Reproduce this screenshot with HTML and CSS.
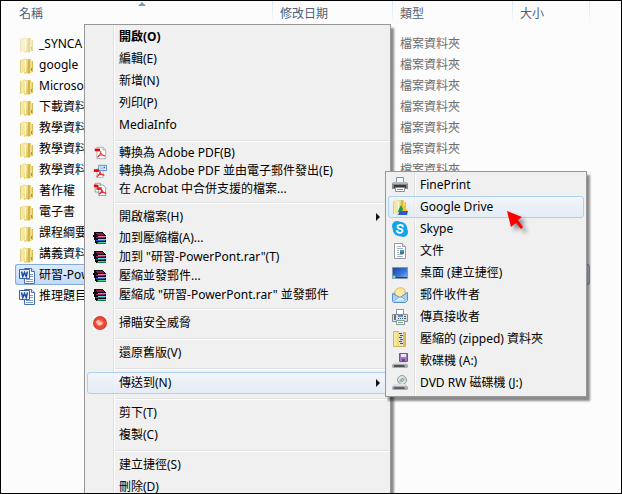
FILE: index.html
```html
<!DOCTYPE html>
<html lang="zh-Hant">
<head>
    <meta charset="UTF-8">
    <meta name="viewport" content="width=device-width, initial-scale=1.0">
    <title>檔案總管</title>
    <link rel="stylesheet" href="styles.css">
</head>
<body>
    <!-- Shared icons -->
    <svg class="sprite" aria-hidden="true">
        <defs>
            <linearGradient id="gold" x1="0" x2="1" y1="0" y2="0">
                <stop offset="0" stop-color="#fbf1ae"/>
                <stop offset="1" stop-color="#d9b848"/>
            </linearGradient>
            <linearGradient id="goldFront" x1="0" x2="1" y1="0" y2="1">
                <stop offset="0" stop-color="#fdf6c4"/>
                <stop offset="1" stop-color="#dfc050"/>
            </linearGradient>
            <linearGradient id="screen" x1="0" x2="1" y1="0" y2="1">
                <stop offset="0" stop-color="#1c3f9c"/>
                <stop offset="0.6" stop-color="#3c79d8"/>
                <stop offset="1" stop-color="#8fc0f5"/>
            </linearGradient>
            <radialGradient id="redBall">
                <stop offset="0" stop-color="#ffc4b4"/>
                <stop offset="0.5" stop-color="#f0503c"/>
                <stop offset="1" stop-color="#d83a30"/>
            </radialGradient>
        </defs>
        <symbol id="folder" viewBox="0 0 16 16">
            <path d="M5 1h7v14H5z" fill="#e8d06c"/>
            <path d="M11 3h3v11l-3 1z" fill="#efdc88"/>
            <path d="M13 3h1v11h-1z" fill="#d8bc5c"/>
            <path d="M1 2l5-2v14l-5 1z" fill="#f3e7a4"/>
            <path d="M1 2h1v13H1z" fill="#e2cd78"/>
            <path d="M5 2l4-1v14l-4 1z" fill="url(#goldFront)"/>
            <path d="M9 1l2 1v13l-2 1z" fill="#d2b24a"/>
            <path d="M6 3h1v11H6z" fill="#fffbe0"/>
            <path d="M12 10h1v3h-1z" fill="#5fa0c8"/>
        </symbol>
        <symbol id="word" viewBox="0 0 16 16">
            <path d="M5.500.500h7l3 3v12h-10z" fill="#fff" stroke="#4a6fae"/>
            <path d="M12.500.500v3h3" fill="#dbe7f7" stroke="#4a6fae"/>
            <path d="M11 6.500h3M11 8.500h3M7 11.500h7M7 13.500h7" stroke="#7d9cce"/>
            <path d="M.500 1.500h10v9h-10z" fill="#e6effb" stroke="#3a62a8"/>
            <path d="M2.500 3.500l1.300 5 1.700-4 1.700 4 1.300-5" fill="none" stroke="#1f4aa0" stroke-width="1.500"/>
        </symbol>
        <symbol id="pdf" viewBox="0 0 16 16">
            <path d="M4.500 1.500h7l3 3v10h-10z" fill="#fff" stroke="#a8a8a8"/>
            <path d="M11.500 1.500v3h3" fill="#ddd" stroke="#a8a8a8"/>
            <path d="M2 3h6v3H2z" fill="#e00"/>
            <path d="M9 6c0 3-1 5-4 7M8.500 6c.500 3 2.500 5 5 5.500M6 11.500c2-1.500 5-1.500 8 0" fill="none" stroke="#e0323a" stroke-width="1.300"/>
        </symbol>
        <symbol id="pdf-mail" viewBox="0 0 16 16">
            <path d="M4.500 5.500h7v10h-7z" fill="#fff" stroke="#b0b0b0"/>
            <path d="M6.500 1.500h9v6h-9z" fill="#e8f2fd" stroke="#4a86c8"/>
            <path d="M8 3.500h3M8 5.500h4" stroke="#8db4df"/>
            <path d="M12 3h2v2h-2z" fill="#36c"/>
            <path d="M1 6h6v3H1z" fill="#e00"/>
            <path d="M8 8c0 3-1 5-4 7M8 8c.500 3 2 4.500 4.500 5M5 13c2-1.500 5-1.500 8 0" fill="none" stroke="#e0323a" stroke-width="1.300"/>
        </symbol>
        <symbol id="pdf-merge" viewBox="0 0 16 16">
            <path d="M2.500 1.500h6v10h-6z" fill="#fff" stroke="#909090"/>
            <path d="M1 3h5v3H1z" fill="#e00"/>
            <path d="M6.500 3.500h5l3 3v9h-8z" fill="#fff" stroke="#909090"/>
            <path d="M4 6h6v3H4z" fill="#d22"/>
            <path d="M10 8c0 3-1 5-3 6M10 8c.500 3 2 4.500 5 5M7 13c2-1.500 5-1.500 8 0" fill="none" stroke="#e0323a" stroke-width="1.300"/>
        </symbol>
        <symbol id="rar" viewBox="0 0 14 14" shape-rendering="crispEdges">
            <path d="M1 1h8l4 3v9H4l-2-1v-2l-1-1V7L0 6V4l1-1z" fill="#120a10"/>
            <path d="M2 2h7l3 2H5z" fill="#8c1c46"/>
            <path d="M5 5h8v1H5z" fill="#f070b8"/>
            <path d="M3 6h9v1H3z" fill="#a02058"/>
            <path d="M5 8h8v1H5z" fill="#60d8f8"/>
            <path d="M3 9h9v1H3z" fill="#2060c8"/>
            <path d="M5 11h8v1H5z" fill="#50d080"/>
            <path d="M4 12h9v1H4z" fill="#108048"/>
        </symbol>
        <symbol id="scan" viewBox="0 0 16 16">
            <path d="M0 0h16v16H0z" fill="#fff"/>
            <circle cx="8" cy="8" r="8" fill="url(#redBall)"/>
            <path d="M3 6c1 6 8 6 9 0-2 3-5 2-5-2" fill="#ffd8cc" opacity=".7"/>
        </symbol>
        <symbol id="printer" viewBox="0 0 16 16">
            <path d="M4.500.500h7v6h-7z" fill="#f4f8fc" stroke="#8a8f96"/>
            <path d="M1 5h14l1 2v5H0V7z" fill="#85898f"/>
            <path d="M1 5h14v2H1z" fill="#b4b8bc"/>
            <path d="M2 8h12v3H2z" fill="#35383d"/>
            <path d="M3.500 10.500h9v4h-9z" fill="#fff" stroke="#8a8f96"/>
            <path d="M5 12h3v1H5z" fill="#4db36a"/>
            <path d="M8 12h3v1H8z" fill="#4a90e2"/>
        </symbol>
        <symbol id="drive" viewBox="0 0 16 16">
            <use href="#folder"/>
            <path d="M9 6h3l4 7h-4z" fill="#fbc31c"/>
            <path d="M9 6l2 4-3 6-2-4z" fill="#159a4e"/>
            <path d="M8 12h8l-1 4H6z" fill="#2a58d8"/>
        </symbol>
        <symbol id="skype" viewBox="0 0 16 16">
            <circle cx="5" cy="5" r="5" fill="#12a5e8"/>
            <circle cx="11" cy="11" r="5" fill="#12a5e8"/>
            <circle cx="8" cy="8" r="7.300" fill="#12a5e8"/>
            <path d="M11 5.500C10.500 4 8.500 3.800 7.500 4 5 4.400 4.700 7 7 7.600l2 .500c2.500.700 1.800 3.500-.700 3.700-1.500.100-3-.500-3.300-2" fill="none" stroke="#fff" stroke-width="1.800" stroke-linecap="round"/>
        </symbol>
        <symbol id="document" viewBox="0 0 16 16">
            <path d="M2.500.500h8l3 3v12h-11z" fill="#fff" stroke="#969ba2"/>
            <path d="M10.500.500v3h3" fill="#e4e8ec" stroke="#969ba2"/>
            <path d="M5 3.500h4M5 5.500h6M5 7.500h2M5 9.500h2M5 11.500h6M5 13.500h6" stroke="#a3b3c5"/>
            <path d="M8 7h4v4H8z" fill="#4b8fc9"/>
            <path d="M8 9h4v2H8z" fill="#347a8a"/>
        </symbol>
        <symbol id="desktop" viewBox="0 0 16 16">
            <path d="M.500 2.500h15v11H.500z" fill="url(#screen)" stroke="#8995a5"/>
            <path d="M1 12h14v1H1z" fill="#2b3f63"/>
            <circle cx="2" cy="12" r="1.500" fill="#7fd0e8"/>
        </symbol>
        <symbol id="mail" viewBox="0 0 16 16">
            <path d="M1 6l7-5 7 5v8H1z" fill="#8dbce6"/>
            <path d="M3 8V4c2-4 8-4 10-1v5l-5 3z" fill="#fde9a8" stroke="#f0b050"/>
            <path d="M.500 6.500L8 10.500l7.500-5v8l-2 2h-12l-1-1z" fill="#a9d2f4" stroke="#5c93c8"/>
            <path d="M2 14l5-3.500 2-.500 5 3" fill="#e6f4ff" stroke="#84b3dc"/>
        </symbol>
        <symbol id="fax" viewBox="0 0 16 16">
            <path d="M4.500.500h7v6h-7z" fill="#fff" stroke="#8c949c"/>
            <path d="M.500 5.500h15v7H.500z" fill="#dde1e5" stroke="#858c94"/>
            <path d="M2 6h2v5H2z" fill="#68717b"/>
            <path d="M6 6h5v2H6z" fill="#4d8ec8"/>
            <path d="M6 9h1v1H6zM8 9h1v1H8zM10 9h1v1h-1zM12 7h2v1h-2zM12 9h2v1h-2z" fill="#4e5964"/>
            <path d="M4.500 11.500h8v4h-8z" fill="#fff" stroke="#8c949c"/>
            <path d="M6 13.500h5" stroke="#58b070"/>
        </symbol>
        <symbol id="zip" viewBox="0 0 16 16">
            <path d="M1.500.500h5l1 1h6v14h-12z" fill="url(#gold)" stroke="#d5b456"/>
            <path d="M7 1h4v14H7z" fill="#dfe3e8"/>
            <path d="M7 2.500h3M8 4.500h3M7 6.500h3M8 8.500h3M7 10.500h3M8 12.500h3" stroke="#4d535b"/>
        </symbol>
        <symbol id="floppy" viewBox="0 0 16 16">
            <path d="M7.500.500h8v8h-8z" fill="#a17abb" stroke="#77529a"/>
            <path d="M9 1h5v3H9z" fill="#eee4f5"/>
            <path d="M10 6h3v3h-3z" fill="#6a478c"/>
            <path d="M3 9h10l3 3v2l-1 1H1l-1-1v-2z" fill="#a9adb1"/>
            <path d="M3 9h10l2 2H1z" fill="#dfe1e3"/>
            <path d="M2 12h11v2H2z" fill="#4f5357"/>
            <path d="M12 12h2v1h-2z" fill="#4fe05c"/>
        </symbol>
        <symbol id="dvd" viewBox="0 0 16 16">
            <circle cx="10" cy="5" r="4.500" fill="#dde4e4" stroke="#91989b"/>
            <path d="M10 5l3-4 2 3zM10 5l-4 1 2 3z" fill="#a6d5b0"/>
            <circle cx="10" cy="5" r="1.300" fill="#fff" stroke="#858c90"/>
            <path d="M3 9h10l3 3v2l-1 1H1l-1-1v-2z" fill="#a9adb1"/>
            <path d="M3 9h10l2 2H1z" fill="#dfe1e3"/>
            <path d="M2 12h11v2H2z" fill="#5d6165"/>
            <path d="M12 12h2v1h-2z" fill="#4fe05c"/>
        </symbol>
    </svg>

    <table class="files">
        <colgroup>
            <col class="col-name">
            <col class="col-date">
            <col class="col-type">
            <col class="col-size">
        </colgroup>
        <thead>
            <tr>
                <th class="sorted">名稱</th>
                <th>修改日期</th>
                <th>類型</th>
                <th>大小</th>
            </tr>
        </thead>
        <tbody>
            <tr class="hidden-file"><td><svg class="icon"><use href="#folder"/></svg>_SYNCA</td><td></td><td>檔案資料夾</td><td></td></tr>
            <tr><td><svg class="icon"><use href="#folder"/></svg>google</td><td></td><td>檔案資料夾</td><td></td></tr>
            <tr><td><svg class="icon"><use href="#folder"/></svg>Microso</td><td></td><td>檔案資料夾</td><td></td></tr>
            <tr><td><svg class="icon"><use href="#folder"/></svg>下載資料</td><td></td><td>檔案資料夾</td><td></td></tr>
            <tr><td><svg class="icon"><use href="#folder"/></svg>教學資料</td><td></td><td>檔案資料夾</td><td></td></tr>
            <tr><td><svg class="icon"><use href="#folder"/></svg>教學資料</td><td></td><td>檔案資料夾</td><td></td></tr>
            <tr><td><svg class="icon"><use href="#folder"/></svg>教學資料</td><td></td><td>檔案資料夾</td><td></td></tr>
            <tr><td><svg class="icon"><use href="#folder"/></svg>著作權</td><td></td><td></td><td></td></tr>
            <tr><td><svg class="icon"><use href="#folder"/></svg>電子書</td><td></td><td></td><td></td></tr>
            <tr><td><svg class="icon"><use href="#folder"/></svg>課程綱要</td><td></td><td></td><td></td></tr>
            <tr><td><svg class="icon"><use href="#folder"/></svg>講義資料</td><td></td><td></td><td></td></tr>
            <tr class="selected"><td><svg class="icon"><use href="#word"/></svg>研習-Pow</td><td></td><td></td><td></td></tr>
            <tr><td><svg class="icon"><use href="#word"/></svg>推理題目</td><td></td><td></td><td></td></tr>
        </tbody>
    </table>

    <div class="menu context-menu">
        <button class="item default">開啟(O)</button>
        <button class="item">編輯(E)</button>
        <button class="item">新增(N)</button>
        <button class="item">列印(P)</button>
        <button class="item">MediaInfo</button>
        <hr>
        <button class="item pdf"><svg class="icon"><use href="#pdf"/></svg>轉換為 Adobe PDF(B)</button>
        <button class="item pdf"><svg class="icon"><use href="#pdf-mail"/></svg>轉換為 Adobe PDF 並由電子郵件發出(E)</button>
        <button class="item pdf"><svg class="icon"><use href="#pdf-merge"/></svg>在 Acrobat 中合併支援的檔案...</button>
        <hr>
        <button class="item more">開啟檔案(H)</button>
        <button class="item rar"><svg class="icon"><use href="#rar"/></svg>加到壓縮檔(A)...</button>
        <button class="item rar"><svg class="icon"><use href="#rar"/></svg>加到 "研習-PowerPont.rar"(T)</button>
        <button class="item rar"><svg class="icon"><use href="#rar"/></svg>壓縮並發郵件...</button>
        <button class="item rar"><svg class="icon"><use href="#rar"/></svg>壓縮成 "研習-PowerPont.rar" 並發郵件</button>
        <hr>
        <button class="item"><svg class="icon"><use href="#scan"/></svg>掃瞄安全威脅</button>
        <hr>
        <button class="item">還原舊版(V)</button>
        <hr>
        <button class="item more active">傳送到(N)</button>
        <hr>
        <button class="item">剪下(T)</button>
        <button class="item">複製(C)</button>
        <hr>
        <button class="item">建立捷徑(S)</button>
        <button class="item">刪除(D)</button>
    </div>

    <div class="menu send-to">
        <button class="item"><svg class="icon"><use href="#printer"/></svg>FinePrint</button>
        <button class="item active"><svg class="icon"><use href="#drive"/></svg>Google Drive</button>
        <button class="item"><svg class="icon"><use href="#skype"/></svg>Skype</button>
        <button class="item"><svg class="icon"><use href="#document"/></svg>文件</button>
        <button class="item"><svg class="icon"><use href="#desktop"/></svg>桌面 (建立捷徑)</button>
        <button class="item"><svg class="icon"><use href="#mail"/></svg>郵件收件者</button>
        <button class="item"><svg class="icon"><use href="#fax"/></svg>傳真接收者</button>
        <button class="item"><svg class="icon"><use href="#zip"/></svg>壓縮的 (zipped) 資料夾</button>
        <button class="item"><svg class="icon"><use href="#floppy"/></svg>軟碟機 (A:)</button>
        <button class="item"><svg class="icon"><use href="#dvd"/></svg>DVD RW 磁碟機 (J:)</button>
    </div>

    <svg class="pointer" viewBox="0 0 24 26" aria-hidden="true">
        <path d="M0 0l15 6-4 3 5 7-2 2-5-6-5 4z" fill="#f00"/>
    </svg>
</body>
</html>
```
FILE: styles.css
```css
* {
    box-sizing: border-box;
}
body {
    position: relative;
    height: 100vh;
    margin: 0;
    border: 1px solid #000;
    overflow: hidden;
    background-color: #fcfcfc;
    color: #000;
    font-family: "Noto Sans", "Noto Sans CJK TC", sans-serif;
    font-size: 12px;
    line-height: 20px;
}
.sprite {
    position: absolute;
    width: 0;
    height: 0;
}
.icon {
    width: 16px;
    height: 16px;
    flex: none;
}

/* File list */
.files {
    margin-left: 14px;
    table-layout: fixed;
    width: 575px;
    border-collapse: separate;
    border-spacing: 0;
}
.col-name {
    width: 258px;
}
.col-date, .col-type {
    width: 120px;
}
.files th {
    position: relative;
    height: 32px;
    padding: 3px 7px 9px;
    text-align: left;
    font-weight: normal;
    color: #4c607a;
    background: linear-gradient(#d5e5f7, #fcfcfc) right top / 1px 23px no-repeat;
}
.files th:first-child {
    padding-left: 4px;
}
/* Sort arrow */
.sorted::before {
    content: "";
    position: absolute;
    top: 1px;
    left: 123px;
    border: 4px solid transparent;
    border-top: 0;
    border-bottom: 4px solid #6f9fc0;
}
.files td {
    height: 21px;
    padding: 0 7px;
    border: solid transparent;
    border-width: 1px 0;
    line-height: 19px;
    white-space: nowrap;
    color: #6d6d6d;
}
.files td:first-child {
    padding-left: 3px;
    border-left-width: 1px;
    color: #000;
}
.files td:last-child {
    border-right-width: 1px;
}
.files .icon {
    margin-right: 4px;
    vertical-align: middle;
}
.hidden-file .icon {
    opacity: 0.5;
}
.files .selected td {
    border-color: #84acdd;
    background: linear-gradient(#dcebfc, #c1dbfc);
}
.selected td:first-child {
    border-radius: 3px 0 0 3px;
}
.selected td:last-child {
    border-radius: 0 3px 3px 0;
}

/* Menus */
.menu {
    position: absolute;
    display: flex;
    flex-direction: column;
    padding: 2px;
    border: 1px solid #979797;
    background: linear-gradient(90deg, #e0e0e0 50%, #fff 50%) 28px 0 / 2px 100% no-repeat, #f0f0f0;
    box-shadow: 3px 4px 2px rgba(0, 0, 0, 0.45);
}
.context-menu {
    top: 23px;
    left: 83px;
    width: 307px;
    padding-top: 1px;
}
.send-to {
    top: 170px;
    left: 384px;
    width: 202px;
}
.item {
    display: flex;
    align-items: center;
    height: 22px;
    padding: 0 7px 0 31px;
    border: 1px solid transparent;
    border-radius: 3px;
    background: none;
    color: #000;
    font: inherit;
    text-align: left;
    white-space: nowrap;
}
.item .icon {
    margin-left: -28px;
    margin-right: 12px;
}
.context-menu .icon {
    width: 14px;
    height: 14px;
    margin-left: -26px;
}
.item.default {
    font-weight: bold;
}
.item.pdf {
    height: 18px;
}
.item.rar {
    height: 19px;
}
.item.active {
    border-color: #aecff7;
    background: linear-gradient(rgba(243, 246, 251, 0.8), rgba(225, 235, 248, 0.8));
}
/* Submenu arrow */
.item.more::after {
    content: "";
    margin-left: auto;
    border: 4px solid transparent;
    border-right: 0;
    border-left: 4px solid #111;
}
.menu hr {
    width: auto;
    height: 2px;
    margin: 4px 0 2px 28px;
    border: 0;
    border-top: 1px solid #e0e0e0;
    background-color: #fff;
}

/* Red mouse pointer */
.pointer {
    position: absolute;
    top: 210px;
    left: 506px;
    width: 24px;
    height: 26px;
    filter: drop-shadow(4px 4px 2px rgba(0, 0, 0, 0.4));
}
```
